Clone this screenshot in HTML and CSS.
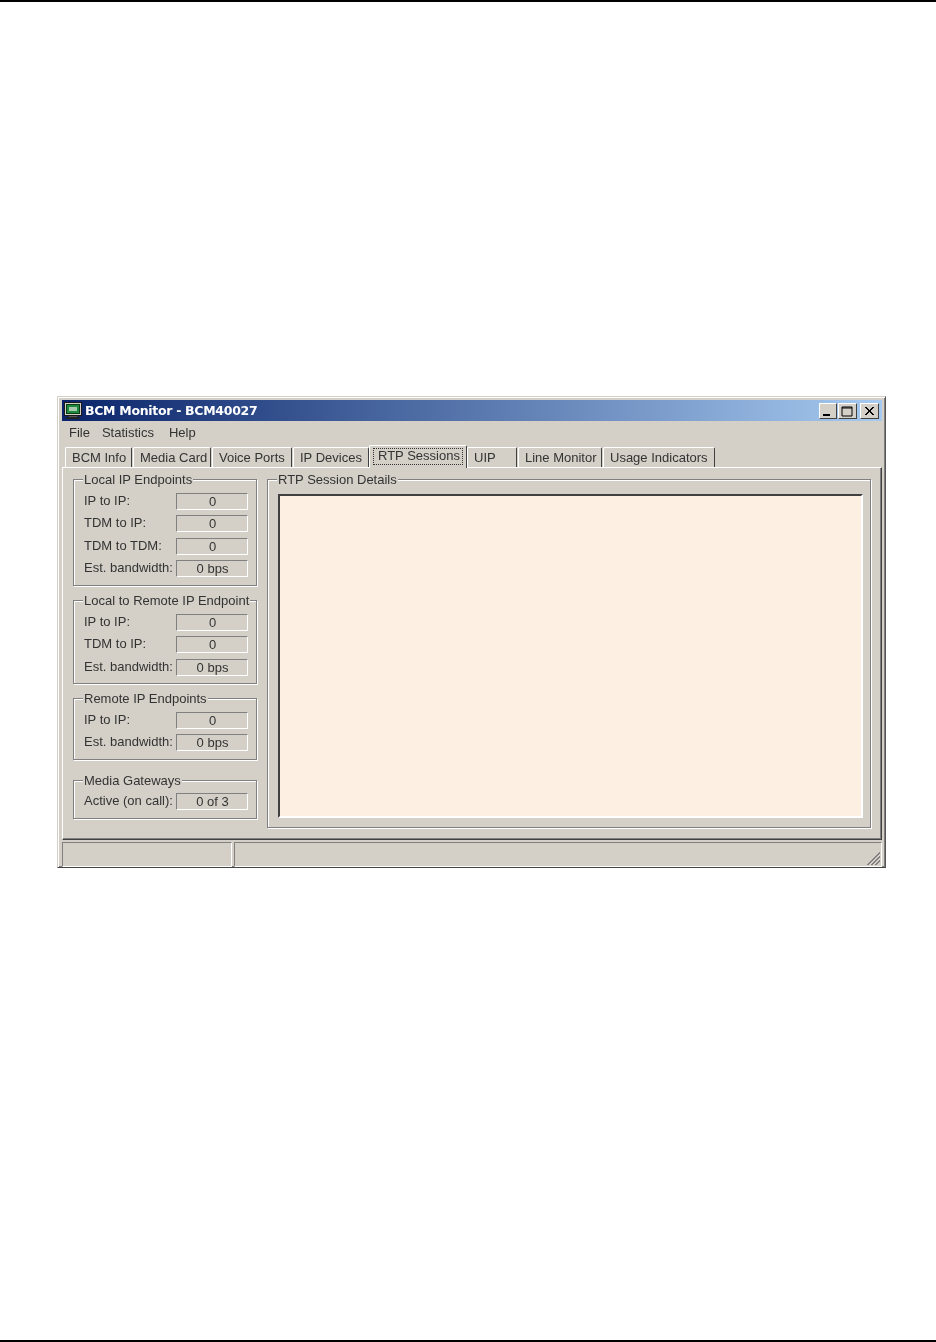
FILE: index.html
```html
<!DOCTYPE html>
<html lang="en">
<head>
<meta charset="utf-8">
<title>BCM Monitor - BCM40027</title>
<link rel="stylesheet" href="styles.css">
</head>
<body>
<div class="page">
  <div class="window">
    <div class="titlebar">
      <svg class="appicon" width="18" height="17" viewBox="0 0 18 17">
        <rect x="0.5" y="0.5" width="17" height="13" fill="#d4d0c8" stroke="#1a1a1a"/>
        <rect x="2.5" y="2.5" width="13" height="9" fill="#1f8a3c" stroke="#0c3d1a"/>
        <rect x="5" y="5" width="8" height="4" fill="#a8c8b0"/>
        <rect x="5" y="14" width="8" height="1" fill="#555"/>
        <rect x="2" y="15" width="14" height="2" fill="#222"/>
      </svg>
      <span class="title">BCM Monitor - BCM40027</span>
      <div class="controls">
        <div class="ctl"><svg width="18" height="15" viewBox="0 0 18 15"><rect x="4" y="10" width="7" height="2" fill="#000"/></svg></div>
        <div class="ctl ctl-wide"><svg width="18" height="15" viewBox="0 0 18 15"><path d="M4 3h10v9H4z M4 4h10" fill="none" stroke="#000" stroke-width="1"/></svg></div>
        <div class="ctl ctl-wide ctl-close"><svg width="18" height="15" viewBox="0 0 18 15"><path d="M5 3l8 8M6 3l8 8M13 3l-8 8M14 3l-8 8" stroke="#000" stroke-width="1" fill="none"/></svg></div>
      </div>
    </div>
    <div class="menubar">
      <span class="menu-file">File</span>
      <span class="menu-stats">Statistics</span>
      <span>Help</span>
    </div>
    <div class="tabs">
      <div class="tab t1">BCM Info</div>
      <div class="tab t2">Media Card</div>
      <div class="tab t3">Voice Ports</div>
      <div class="tab t4">IP Devices</div>
      <div class="tab active t5"><span class="focus">RTP Sessions</span></div>
      <div class="tab t6">UIP</div>
      <div class="tab t7">Line Monitor</div>
      <div class="tab t8">Usage Indicators</div>
    </div>
    <div class="panel">
      <div class="left">
        <section class="group g1">
          <div class="legend">Local IP Endpoints</div>
          <div class="row"><span class="label">IP to IP:</span><output class="value">0</output></div>
          <div class="row"><span class="label">TDM to IP:</span><output class="value">0</output></div>
          <div class="row"><span class="label">TDM to TDM:</span><output class="value">0</output></div>
          <div class="row"><span class="label">Est. bandwidth:</span><output class="value">0 bps</output></div>
        </section>
        <section class="group g2">
          <div class="legend">Local to Remote IP Endpoint</div>
          <div class="row"><span class="label">IP to IP:</span><output class="value">0</output></div>
          <div class="row"><span class="label">TDM to IP:</span><output class="value">0</output></div>
          <div class="row"><span class="label">Est. bandwidth:</span><output class="value">0 bps</output></div>
        </section>
        <section class="group g3">
          <div class="legend">Remote IP Endpoints</div>
          <div class="row"><span class="label">IP to IP:</span><output class="value">0</output></div>
          <div class="row"><span class="label">Est. bandwidth:</span><output class="value">0 bps</output></div>
        </section>
        <section class="group g4">
          <div class="legend">Media Gateways</div>
          <div class="row"><span class="label">Active (on call):</span><output class="value">0 of 3</output></div>
        </section>
      </div>
      <section class="group details">
        <div class="legend">RTP Session Details</div>
        <div class="listbox"></div>
      </section>
    </div>
    <div class="statusbar">
      <div class="pane pane1"></div>
      <div class="pane pane2">
        <svg class="grip" width="16" height="16" viewBox="0 0 16 16">
          <path d="M15 2L2 15M15 3L3 15M15 6L6 15M15 7L7 15M15 10L10 15M15 11L11 15" stroke="#808080" stroke-width="1" fill="none"/>
        </svg>
      </div>
    </div>
  </div>
</div>
</body>
</html>
```
FILE: styles.css
```css
* { box-sizing: border-box; }
html, body { margin: 0; padding: 0; background: #fff; }
body { width: 936px; height: 1342px; overflow: hidden; }
.page {
  height: 1342px;
  border-top: 2px solid #000;
  border-bottom: 2px solid #000;
  padding: 394px 0 0 57px;
}
.window {
  width: 829px;
  height: 472px;
  background: #d4d0c8;
  border: 1px solid;
  border-color: #d4d0c8 #555 #444 #d4d0c8;
  box-shadow: inset 1px 1px 0 #fff, inset -1px -1px 0 #808080;
  padding: 3px 3px 1px 4px;
  display: flex;
  flex-direction: column;
  font: 13px/16px "Liberation Sans", Arial, sans-serif;
  color: #333;
  filter: blur(0.3px);
}
.titlebar {
  height: 21px;
  flex: none;
  display: flex;
  align-items: center;
  padding: 0 3px 0 2px;
  background: linear-gradient(90deg, #0a246a, #a6caf0);
}
.appicon { flex: none; margin-right: 3px; }
.title {
  font: bold 12.5px/16px "DejaVu Sans", Verdana, sans-serif;
  color: #fff;
  letter-spacing: -0.3px;
}
.controls { margin-left: auto; display: flex; }
.ctl {
  width: 18px;
  height: 16px;
  background: #d4d0c8;
  border: 1px solid;
  border-color: #fff #404040 #404040 #fff;
  display: flex;
  overflow: hidden;
}
.ctl-wide { width: 19px; margin-left: 1px; }
.ctl svg { flex: none; margin: 0 0 0 -1px; }
.ctl-close { margin-left: 3px; }
.menubar {
  height: 23px;
  flex: none;
  display: flex;
  align-items: center;
  padding-left: 7px;
}
.menu-file { margin-right: 12px; }
.menu-stats { margin-right: 15px; }
.tabs {
  height: 23px;
  flex: none;
  display: flex;
  align-items: flex-end;
  padding-left: 3px;
  position: relative;
}
.tab {
  height: 20px;
  flex: none;
  padding: 2px 0 0 6px;
  background: #d4d0c8;
  border: 1px solid;
  border-color: #fff #404040 transparent #fff;
  border-bottom: 0;
  border-radius: 2px 2px 0 0;
  margin-right: 1px;
  white-space: nowrap;
}
.t1 { width: 67px; }
.t2 { width: 78px; }
.t3 { width: 80px; }
.t4 { width: 76px; }
.t5 { width: 98px; }
.t6 { width: 50px; }
.t7 { width: 84px; }
.t8 { width: 112px; margin-right: 0; }
.tab.active {
  height: 23px;
  padding: 2px 3px 0 3px;
  margin: 0 0 -1px -1px;
  position: relative;
  z-index: 1;
}
.focus {
  display: block;
  height: 17px;
  padding: 0 0 0 5px;
  outline: 1px dotted #333;
  outline-offset: -1px;
}
.panel {
  height: 373px;
  flex: none;
  display: flex;
  align-items: flex-start;
  gap: 10px;
  padding: 11px 10px 0 10px;
  border: 1px solid;
  border-color: #fff #404040 #404040 #fff;
  box-shadow: inset -1px -1px 0 #808080;
}
.left { width: 184px; flex: none; display: flex; flex-direction: column; }
.group {
  position: relative;
  border: 1px solid #808080;
  box-shadow: 1px 1px 0 #fff, inset 1px 1px 0 #fff;
}
.legend {
  position: absolute;
  top: -8px;
  left: 9px;
  padding: 0 1px;
  background: #d4d0c8;
  white-space: nowrap;
}
.g1 { height: 107px; padding-top: 13px; margin-bottom: 14px; }
.g2 { height: 84px; padding-top: 13px; margin-bottom: 14px; }
.g3 { height: 62px; padding-top: 13px; margin-bottom: 20px; }
.g4 { height: 39px; padding-top: 12px; }
.row {
  height: 22.3px;
  display: flex;
  padding-left: 10px;
  padding-right: 8px;
  justify-content: space-between;
}
.label { white-space: nowrap; line-height: 16px; }
.value {
  display: block;
  width: 72px;
  height: 17px;
  text-align: center;
  text-indent: 1px;
  border: 1px solid;
  border-color: #808080 #fff #fff #808080;
  line-height: 15px;
  flex: none;
}
.details { flex: 1; height: 349px; padding: 14px 7px 9px 10px; }
.listbox {
  height: 100%;
  background: #fdf0e2;
  border: 2px solid;
  border-color: #404040 #fff #fff #404040;
}
.statusbar {
  flex: none;
  height: 25px;
  margin-top: 2px;
  display: flex;
  gap: 2px;
}
.pane {
  border: 1px solid;
  border-color: #808080 #fff #fff #808080;
  position: relative;
}
.pane1 { width: 170px; }
.pane2 { flex: 1; }
.grip { position: absolute; right: 0; bottom: 0; }
```
